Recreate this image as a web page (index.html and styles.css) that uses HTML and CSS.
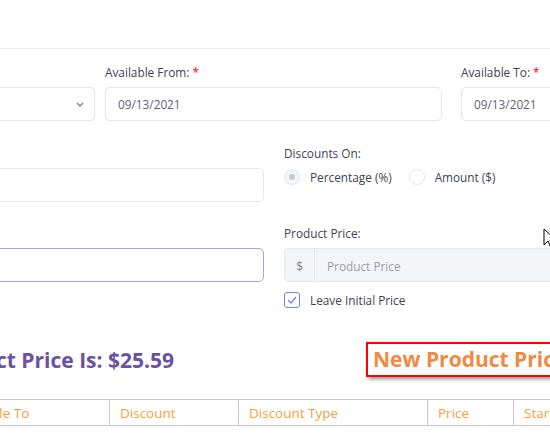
FILE: index.html
```html
<!DOCTYPE html>
<html>
<head>
<meta charset="utf-8">
<link rel="stylesheet" href="styles.css">
</head>
<body>
<div class="page">
  <div class="topbar"></div>
  <div class="form">
    <div class="row r1">
      <div class="field f-select">
        <label>&nbsp;</label>
        <div class="input select">
          <svg class="chev" width="8" height="5" viewBox="0 0 8 5"><path d="M1 1l3 3 3-3" fill="none" stroke="#7e8299" stroke-width="1.4"/></svg>
        </div>
      </div>
      <div class="field f-from">
        <label>Available From: <span class="req">*</span></label>
        <div class="input">09/13/2021</div>
      </div>
      <div class="field f-to">
        <label>Available To: <span class="req">*</span></label>
        <div class="input">09/13/2021</div>
      </div>
    </div>
    <div class="row r2">
      <div class="field f-wide">
        <label>&nbsp;</label>
        <div class="input"></div>
      </div>
      <div class="field f-side">
        <label>Discounts On:</label>
        <div class="radios">
          <span class="opt"><span class="radio checked"><span class="dot"></span></span>Percentage (%)</span>
          <span class="opt"><span class="radio"></span>Amount ($)</span>
        </div>
      </div>
    </div>
    <div class="row r3">
      <div class="field f-wide">
        <label>&nbsp;</label>
        <div class="input focus"></div>
      </div>
      <div class="field f-side">
        <label>Product Price:</label>
        <div class="group">
          <span class="prepend">$</span>
          <span class="gin">Product Price</span>
        </div>
        <div class="check">
          <span class="box"><svg width="10" height="8" viewBox="0 0 10 8"><path d="M1 4l3 3 5-6" fill="none" stroke="#6d87f0" stroke-width="1.3"/></svg></span>Leave Initial Price
        </div>
      </div>
    </div>
    <div class="headline">
      <div class="old">Current Product Price Is: $25.59</div>
      <div class="new">New Product Price Is: $25.59</div>
    </div>
    <table class="tbl">
      <colgroup>
        <col style="width:243px"><col style="width:166px"><col style="width:129px"><col style="width:189px"><col style="width:86px"><col style="width:150px">
      </colgroup>
      <thead>
        <tr><th></th><th>Available To</th><th>Discount</th><th>Discount Type</th><th>Price</th><th>Start Date</th></tr>
      </thead>
    </table>
  </div>
</div>
<svg class="cursor" width="14" height="22" viewBox="0 0 14 22"><path d="M1 1v16l4-4 3 7 2-1-3-7h6z" fill="#fff" stroke="#000" stroke-width="1"/></svg>
</body>
</html>
```
FILE: styles.css
```css
html, body {
  margin: 0;
  padding: 0;
  background: #fff;
}
body {
  width: 550px;
  height: 437px;
  overflow: hidden;
  position: relative;
  font-family: "Open Sans", "Noto Sans", sans-serif;
  color: #3f4254;
}
.page {
  margin-left: -300px;
  width: 1300px;
}
.topbar {
  height: 48px;
  border-bottom: 1px solid #ebedf3;
}
.form {
  padding-top: 15px;
}
.row {
  display: flex;
  align-items: flex-start;
}
.r2 { margin-top: 24px; }
.r3 { margin-top: 23px; }
.f-select { width: 395px; }
.f-from { width: 337px; margin-left: 10px; }
.f-to { width: 337px; margin-left: 19px; }
.f-wide { width: 564px; }
.f-side { width: 400px; margin-left: 20px; }
label {
  display: block;
  font-size: 11.8px;
  line-height: 17px;
  margin-bottom: 6px;
  color: #3f4254;
}
.req { color: #f00; }
.input {
  height: 34px;
  box-sizing: border-box;
  border: 1px solid #e4e6ef;
  border-radius: 5px;
  padding: 0 12px;
  display: flex;
  align-items: center;
  font-size: 11.8px;
  color: #5e6278;
}
.select {
  justify-content: flex-end;
  padding-right: 10px;
}
.focus {
  border-color: #98a6f7;
}
.radios {
  display: flex;
  align-items: center;
  height: 18px;
  font-size: 11.8px;
  color: #3f4254;
}
.opt {
  display: flex;
  align-items: center;
  margin-right: 17px;
}
.radio {
  width: 16px;
  height: 16px;
  box-sizing: border-box;
  border: 1px solid #e4e6ef;
  border-radius: 50%;
  margin-right: 10px;
  display: flex;
  align-items: center;
  justify-content: center;
  background: #fff;
}
.radio.checked {
  background: #f3f6f9;
}
.dot {
  width: 6px;
  height: 6px;
  border-radius: 50%;
  background: #c5c9d6;
}
.group {
  display: flex;
  height: 34px;
  box-sizing: border-box;
  border: 1px solid #e4e6ef;
  border-radius: 5px;
  background: #f3f6f9;
  font-size: 11.8px;
}
.prepend {
  width: 29px;
  border-right: 1px solid #e4e6ef;
  display: flex;
  align-items: center;
  justify-content: center;
  color: #7e8299;
  padding-top: 2px;
}
.gin {
  display: flex;
  align-items: center;
  padding-left: 12px;
  padding-top: 2px;
  color: #9a9cae;
}
.check {
  margin-top: 10px;
  display: flex;
  align-items: center;
  height: 16px;
  font-size: 11.8px;
  color: #3f4254;
}
.box {
  width: 16px;
  height: 16px;
  box-sizing: border-box;
  border: 1px solid #6d87f0;
  border-radius: 3px;
  margin-right: 10px;
  display: flex;
  align-items: center;
  justify-content: center;
}
.headline {
  margin-top: 34px;
  display: flex;
  align-items: center;
}
.old {
  width: 474px;
  text-align: right;
  white-space: nowrap;
  font-size: 21px;
  font-weight: 700;
  color: #6b51a3;
}
.new {
  margin-left: 192px;
  border: 2px solid #f00;
  padding: 2px 5px;
  line-height: 27px;
  font-size: 21px;
  font-weight: 700;
  color: #f08a42;
  white-space: nowrap;
  box-shadow: 2px 2px 4px rgba(0,0,0,0.45);
}
.tbl {
  margin-top: 22px;
  border-collapse: collapse;
  table-layout: fixed;
  width: 963px;
}
.tbl th {
  border: 1px solid #c8c8c8;
  height: 25px;
  padding: 0 10px;
  text-align: left;
  font-weight: 400;
  font-size: 13.5px;
  color: #f5a03c;
  white-space: nowrap;
  overflow: hidden;
}
.cursor {
  position: absolute;
  left: 543px;
  top: 228px;
}
```
